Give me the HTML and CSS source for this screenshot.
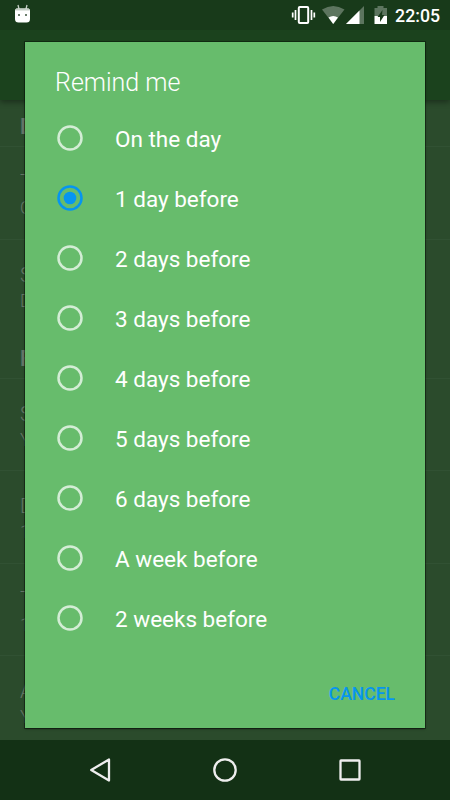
FILE: index.html
```html
<!DOCTYPE html>
<html lang="en">
<head>
<meta charset="utf-8">
<title>Remind me</title>
<link rel="stylesheet" href="styles.css">
</head>
<body>
<div class="screen">
  <header class="status">
    <svg class="droid" width="17" height="20" viewBox="0 0 17 20"><path d="M4 1 5 5M13 1 12 5" stroke="#c4cec5" stroke-width="1.300"/><path d="M1 6.500Q1 4.500 3 4.500H14Q16 4.500 16 6.500V15Q16 18.500 12.500 18.500H4.500Q1 18.500 1 15Z" fill="#fff"/><path d="M2 4.500H15V6.500H2Z" fill="#c4cec5"/><path d="M4 10H6V12H4ZM11 10H13V12H11Z" fill="#6b7d6c"/></svg>
    <svg class="icons" width="98" height="20" viewBox="290 5 98 20">
      <rect x="298.800" y="7" width="9.400" height="16" rx="1" fill="none" stroke="#fff" stroke-width="2"/>
      <path d="M295.500 10V20M292.700 12.500V17.500M311.500 10V20M314.300 12.500V17.500" stroke="#fff" stroke-width="1.700"/>
      <path d="M322 9.600Q333.200 2.200 344.500 9.600L333.200 24Z" fill="#5d755f"/>
      <path d="M328.500 17.500Q333.200 14.500 338 17.500L333.200 24Z" fill="#fff"/>
      <path d="M364 6V24H346Z" fill="#5d755f"/>
      <path d="M359.500 10.500V24H346Z" fill="#fff"/>
      <path d="M374.500 8H377.500V6H383.500V8H387V16H374.500Z" fill="#5d755f"/>
      <path d="M374.500 16H387V24H374.500Z" fill="#fff"/>
      <path d="M382.500 10 377.500 17H380V22L384.500 15H382Z" fill="#183a1a"/>
    </svg>
    <time class="clock">22:05</time>
  </header>
  <div class="toolbar"></div>
  <main class="settings">
    <h2 class="section">D</h2>
    <div class="pref"><div class="name">T</div><div class="value">O</div></div>
    <div class="pref last"><div class="name">S</div><div class="value">D</div></div>
    <h2 class="section">F</h2>
    <div class="pref"><div class="name">S</div><div class="value">Y</div></div>
    <div class="pref"><div class="name">D</div><div class="value">1</div></div>
    <div class="pref"><div class="name">T</div><div class="value">1</div></div>
    <div class="pref"><div class="name">A</div><div class="value">Y</div></div>
  </main>
  <nav class="nav">
    <svg width="450" height="60" viewBox="0 0 450 60" fill="none" stroke="#eee" stroke-width="2.300" stroke-linejoin="round"><path d="M91.200 30 109 19.500V40.500Z"/><circle cx="225" cy="30" r="10.700"/><rect x="340.500" y="20.500" width="19" height="19" rx=".5"/></svg>
  </nav>
</div>
<section class="dialog" role="dialog">
  <h1>Remind me</h1>
  <ul>
    <li><svg class="radio" viewBox="0 0 26 26"><circle cx="13" cy="13" r="11.500"/></svg><span>On the day</span></li>
    <li><svg class="radio on" viewBox="0 0 26 26"><circle cx="13" cy="13" r="11.500"/><circle class="dot" cx="13" cy="13" r="6.300"/></svg><span>1 day before</span></li>
    <li><svg class="radio" viewBox="0 0 26 26"><circle cx="13" cy="13" r="11.500"/></svg><span>2 days before</span></li>
    <li><svg class="radio" viewBox="0 0 26 26"><circle cx="13" cy="13" r="11.500"/></svg><span>3 days before</span></li>
    <li><svg class="radio" viewBox="0 0 26 26"><circle cx="13" cy="13" r="11.500"/></svg><span>4 days before</span></li>
    <li><svg class="radio" viewBox="0 0 26 26"><circle cx="13" cy="13" r="11.500"/></svg><span>5 days before</span></li>
    <li><svg class="radio" viewBox="0 0 26 26"><circle cx="13" cy="13" r="11.500"/></svg><span>6 days before</span></li>
    <li><svg class="radio" viewBox="0 0 26 26"><circle cx="13" cy="13" r="11.500"/></svg><span>A week before</span></li>
    <li><svg class="radio" viewBox="0 0 26 26"><circle cx="13" cy="13" r="11.500"/></svg><span>2 weeks before</span></li>
  </ul>
  <div class="actions"><button>CANCEL</button></div>
</section>
</body>
</html>
```
FILE: styles.css
```css
* { box-sizing: border-box; margin: 0; padding: 0; }
body { font-family: Roboto, "Liberation Sans", sans-serif; width: 450px; height: 800px; overflow: hidden; }
.screen { display: flex; flex-direction: column; height: 800px; background: #2b4b2c; }
.status { position: relative; z-index: 2; flex: none; display: flex; align-items: center; height: 30px; padding: 0 10px 0 14px; background: #183a1a; color: #fff; }
.droid { margin-bottom: 2px; }
.icons { margin-left: auto; }
.clock { width: 45px; margin-left: 7px; padding-top: 2px; font-size: 17.700px; font-weight: 500; line-height: 28px; white-space: nowrap; text-align: right; }
.toolbar { flex: none; height: 70px; background: #1b421d; box-shadow: 0 2px 6px rgba(0, 0, 0, .4); z-index: 1; }
.settings { flex: 1; min-height: 0; overflow: hidden; color: #657566; }
.section { height: 47px; padding: 27px 0 0 20px; border-bottom: 1px solid #315133; font-size: 22px; line-height: 0; font-weight: 700; }
.pref { height: 92.500px; padding: 22px 0 0 20px; border-bottom: 1px solid #315133; }
.pref.last { height: 92px; border-bottom: 0; }
.name { font-size: 20px; line-height: 26px; font-weight: 300; }
.value { font-size: 17.500px; line-height: 26px; font-weight: 300; }
.nav { flex: none; height: 60px; background: #133115; }
.nav svg { display: block; }
.dialog { position: absolute; z-index: 3; left: 25px; top: 42px; width: 400px; height: 686px; display: flex; flex-direction: column; padding: 24px 30px 19px; background: #67bc6c; color: #fff; box-shadow: 0 0 0 1px rgba(0, 0, 0, .35), 0 1px 2px rgba(0, 0, 0, .5); }
h1 { height: 42px; font-size: 25px; line-height: 34px; font-weight: 300; }
li { display: flex; align-items: center; height: 60px; padding-left: 2px; list-style: none; font-size: 22.500px; }
li span { margin-left: 32px; padding-top: 2px; }
.radio { flex: none; width: 26px; height: 26px; fill: none; stroke: #d3edd5; stroke-width: 2.500px; }
.radio.on { stroke: #0695f0; }
.radio .dot { fill: #0695f0; stroke: none; }
.actions { display: flex; justify-content: flex-end; margin-top: auto; }
button { border: 0; background: none; color: #0695f0; font: 500 17.500px/30px Roboto, sans-serif; }
```
